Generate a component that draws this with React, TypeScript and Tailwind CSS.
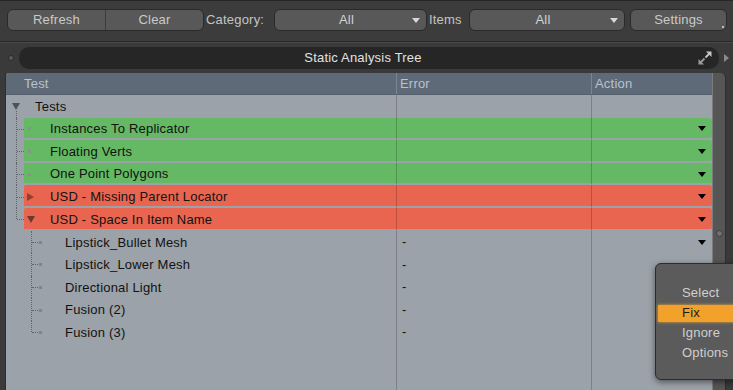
import React from "react";

type Row = {
  label: string;
  level: 0 | 1 | 2;
  color?: "green" | "red";
  toggle?: "down" | "right";
  error?: string;
  arrow?: boolean;
  last?: boolean;
};

const rows: Row[] = [
  { label: "Tests", level: 0, toggle: "down" },
  { label: "Instances To Replicator", level: 1, color: "green", arrow: true },
  { label: "Floating Verts", level: 1, color: "green", arrow: true },
  { label: "One Point Polygons", level: 1, color: "green", arrow: true },
  { label: "USD - Missing Parent Locator", level: 1, color: "red", toggle: "right", arrow: true },
  { label: "USD - Space In Item Name", level: 1, color: "red", toggle: "down", arrow: true, last: true },
  { label: "Lipstick_Bullet Mesh", level: 2, error: "-", arrow: true },
  { label: "Lipstick_Lower Mesh", level: 2, error: "-" },
  { label: "Directional Light", level: 2, error: "-" },
  { label: "Fusion (2)", level: 2, error: "-" },
  { label: "Fusion (3)", level: 2, error: "-", last: true },
];

function Dropdown({ width, gap }: { width: string; gap: string }) {
  return (
    <div
      className={`${width} ${gap} flex h-[22px] items-center rounded-[6px] border border-[#2a2a2a] bg-[#585858] text-[#d2d2d2]`}
    >
      <span className="flex-1 pl-[10px] text-center">All</span>
      <span className="mr-[6px] ml-[4px] h-0 w-0 border-x-[4px] border-t-[5px] border-x-transparent border-t-[#d8d8d8]" />
    </div>
  );
}

function ExpandIcon() {
  return (
    <svg width="16" height="16" viewBox="0 0 16 16">
      <path d="M9 1.5 L14.5 1.5 L14.5 7 Z" fill="#c8c8c8" />
      <path d="M12.5 3.5 L8.5 7.5" stroke="#c8c8c8" strokeWidth="1.8" />
      <path d="M1.5 9 L1.5 14.5 L7 14.5 Z" fill="#9a9a9a" />
      <path d="M3.5 12.5 L7.5 8.5" stroke="#9a9a9a" strokeWidth="1.8" />
    </svg>
  );
}

function TreeRow({ row }: { row: Row }) {
  const bg =
    row.color === "green"
      ? "bg-[#65b864] border-b-2 border-b-[#9ba2a9]"
      : row.color === "red"
        ? "bg-[#e9654f] border-b-2 border-b-[#9ba2a9]"
        : "";

  return (
    <div className="flex h-[22.6px] shrink-0">
      {/* name column */}
      <div className="relative flex w-[390px] items-stretch">
        {row.level === 0 && (
          <div className="flex items-center pl-[6px]">
            <span className="h-0 w-0 border-x-[4px] border-t-[7px] border-x-transparent border-t-[#4e5358]" />
            <span className="absolute top-[16px] bottom-0 left-[10px] border-l border-dotted border-[#5f656b]" />
            <span className="ml-[15px]">{row.label}</span>
          </div>
        )}

        {row.level === 1 && (
          <>
            <div className="relative w-[18px] shrink-0">
              <span
                className={`absolute top-0 left-[10px] border-l border-dotted border-[#5f656b] ${row.last ? "h-1/2" : "bottom-0"}`}
              />
              <span className="absolute top-1/2 left-[11px] w-[7px] border-t border-dotted border-[#5f656b]" />
            </div>
            <div className={`flex flex-1 items-center rounded-l-[2px] pt-[2px] ${bg}`}>
              <div className="flex w-[26px] items-center pl-[3px]">
                {row.toggle === "right" && (
                  <span className="h-0 w-0 border-y-[4px] border-l-[7px] border-y-transparent border-l-[#8e3f31]" />
                )}
                {row.toggle === "down" && (
                  <span className="h-0 w-0 border-x-[4px] border-t-[7px] border-x-transparent border-t-[#6b3a31]" />
                )}
                {!row.toggle && <span className="ml-[1px] h-[3px] w-[3px] bg-[#86958a]" />}
              </div>
              <span>{row.label}</span>
            </div>
          </>
        )}

        {row.level === 2 && (
          <>
            <div className="relative w-[34px] shrink-0">
              <span
                className={`absolute top-0 left-[25px] border-l border-dotted border-[#5f656b] ${row.last ? "h-1/2" : "bottom-0"}`}
              />
              <span className="absolute top-1/2 left-[26px] w-[6px] border-t border-dotted border-[#5f656b]" />
              <span className="absolute top-[calc(50%-1px)] left-[33px] h-[3px] w-[3px] bg-[#7d848a]" />
            </div>
            <div className="flex flex-1 items-center pt-[1px] pl-[25px]">{row.label}</div>
          </>
        )}
      </div>

      {/* error column */}
      <div className={`flex w-[195px] items-center border-l border-l-black/20 pl-[5px] ${bg}`}>
        {row.error}
      </div>

      {/* action column */}
      <div
        className={`flex flex-1 items-center justify-end border-l border-l-black/20 pt-[2px] pr-[6px] ${bg} ${row.color ? "rounded-r-[3px]" : ""}`}
      >
        {row.arrow && (
          <span className="h-0 w-0 border-x-[4px] border-t-[5px] border-x-transparent border-t-black" />
        )}
      </div>
    </div>
  );
}

export default function App() {
  return (
    <div className="relative flex h-[390px] w-[733px] flex-col overflow-hidden bg-[#3a3a3a] font-['Liberation_Sans',Arial,sans-serif] text-[13px] tracking-[0.2px]">
      {/* toolbar */}
      <div className="flex h-[41px] shrink-0 items-start border-t border-[#272727] bg-[#3c3c3c] pt-[8px] pl-[7px] text-[#c4c4c4]">
        <div className="flex h-[22px] w-[197px] rounded-[6px] border border-[#2a2a2a] bg-[#585858] text-[#cacaca]">
          <div className="flex flex-1 items-center justify-center">Refresh</div>
          <div className="w-px bg-[#3d3d3d]" />
          <div className="flex flex-1 items-center justify-center">Clear</div>
        </div>
        <span className="ml-[2px] flex h-[22px] w-[66px] items-center">Category:</span>
        <Dropdown width="w-[153px]" gap="ml-[2px]" />
        <span className="ml-[2px] flex h-[22px] w-[36px] items-center">Items</span>
        <Dropdown width="w-[156px]" gap="ml-[4px]" />
        <div className="relative ml-[5px] flex h-[22px] w-[97px] items-center justify-center rounded-[6px] border border-[#2a2a2a] bg-[#585858] text-[#cacaca]">
          Settings
          <span className="absolute right-[2px] bottom-[2px] h-[2px] w-[2px] bg-[#bdbdbd]" />
        </div>
      </div>
      <div className="h-[2px] shrink-0 border-t border-[#262626] bg-[#4a4a4a]" />

      {/* panel header */}
      <div className="mt-[4px] flex h-[22px] shrink-0 items-center">
        <div className="flex w-[19px] justify-center pl-[2px]">
          <span className="h-[6px] w-[6px] rounded-full border border-[#2a2a2a] bg-[#5a5a5a]" />
        </div>
        <div className="flex h-full flex-1 items-center rounded-[10px] bg-[#262626] pr-[6px]">
          <span className="flex-1 pl-[10px] text-center text-[#e2e2e2]">Static Analysis Tree</span>
          <ExpandIcon />
        </div>
        <div className="flex w-[14px] justify-center">
          <span className="h-0 w-0 border-y-[4px] border-l-[5px] border-y-transparent border-l-[#8a8a8a]" />
        </div>
      </div>

      {/* tree + scrollbar */}
      <div className="mt-[4px] flex min-h-0 flex-1">
        <div className="w-[6px] shrink-0 border-r border-[#2e2e2e]" />
        <div className="flex w-[706px] flex-col overflow-hidden rounded-tl-[3px] bg-[#9ba2a9] text-[#121212]">
          <div className="flex h-[22px] shrink-0 border-b border-[#56606b] bg-[#5e6a77] text-[#b9c3cd]">
            <div className="flex w-[390px] items-center pt-[1px] pl-[18px]">Test</div>
            <div className="flex w-[195px] items-center border-l border-[#7a8693] pt-[1px] pl-[3px]">Error</div>
            <div className="flex flex-1 items-center border-l border-[#7a8693] pt-[1px] pl-[3px]">Action</div>
          </div>
          {rows.map((r) => (
            <TreeRow key={r.label} row={r} />
          ))}
          <div className="flex flex-1">
            <div className="w-[390px]" />
            <div className="w-[195px] border-l border-l-black/20" />
            <div className="flex-1 border-l border-l-black/20" />
          </div>
        </div>
        <div className="flex w-[21px] shrink-0">
          <div className="flex w-[14px] flex-col items-center rounded-tr-[5px] border-l border-[#7c7c7c] border-r border-r-[#2e2e2e] bg-[#565656]">
            <span className="mt-[157px] h-[7px] w-[7px] rounded-full border border-[#3c3c3c] bg-[#707070]" />
          </div>
        </div>
      </div>

      {/* context menu */}
      <div className="absolute top-[263px] left-[655px] w-[92px] rounded-[6px] border border-[#2c2c2c] bg-[#5b5b5b] pt-[19px] pb-[16px] shadow-[0_2px_6px_rgba(0,0,0,0.5)]">
        <div className="flex h-[20px] items-center pl-[26px] text-[#cfcfcf]">Select</div>
        <div className="flex h-[20px] items-center pl-[2px]">
          <div className="flex h-[17px] flex-1 items-center bg-[#f2a22b] pl-[24px] text-[#1e1e1e] shadow-[0_0_3px_#f2a22b]">
            Fix
          </div>
        </div>
        <div className="flex h-[20px] items-center pl-[26px] text-[#cfcfcf]">Ignore</div>
        <div className="flex h-[20px] items-center pl-[26px] text-[#cfcfcf]">Options</div>
      </div>
    </div>
  );
}
